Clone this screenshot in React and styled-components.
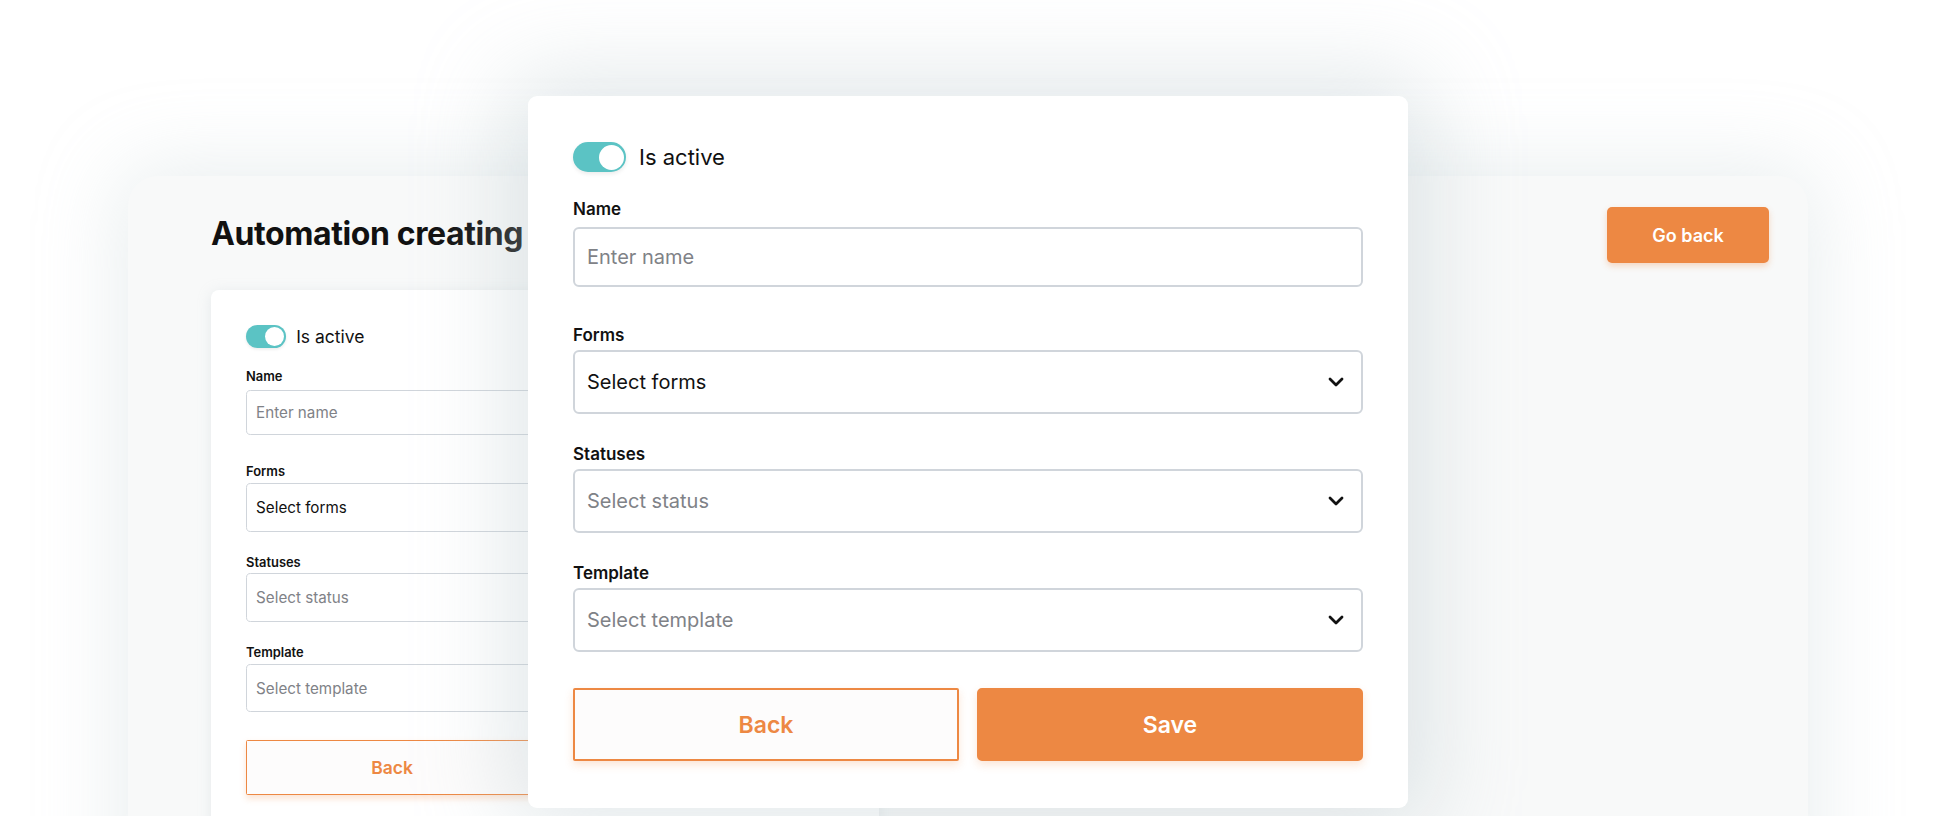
import React from 'react';
import styled, { createGlobalStyle } from 'styled-components';

const ORANGE = '#ed8843';

const GlobalStyle = createGlobalStyle`
  html, body {
    margin: 0;
    padding: 0;
    background: #fff;
  }
  body {
    font-family: Inter, "Noto Sans", sans-serif;
    color: #111;
    overflow: hidden;
  }
`;

const Stage = styled.div`
  position: relative;
  width: 1936px;
  height: 816px;
  overflow: hidden;
  box-sizing: border-box;
  padding: 176px 0 0 128px;
  background: #fff;
`;

const Panel = styled.section`
  width: 1680px;
  height: 720px;
  box-sizing: border-box;
  padding: 31px 39px 0 83px;
  border-radius: 30px 30px 0 0;
  background: #f8f9f9;
  box-shadow: 0 0 80px 10px rgba(196, 208, 212, 0.35);
`;

const PanelHeader = styled.div`
  display: flex;
  justify-content: space-between;
  align-items: flex-start;
`;

const Title = styled.h1`
  margin: 8px 0 0;
  font-size: 32px;
  line-height: 38px;
  font-weight: 700;
  letter-spacing: -0.4px;
  color: #111;
`;

const GoBack = styled.button`
  width: 162px;
  height: 56px;
  border: none;
  border-radius: 5px;
  background: ${ORANGE};
  color: #fff;
  font-family: inherit;
  font-size: 18px;
  font-weight: 600;
  box-shadow: 0 3px 6px rgba(237, 136, 67, 0.3);
`;

const InnerCard = styled.div`
  margin-top: 27px;
  width: 668px;
  box-sizing: border-box;
  padding: 35px;
  border-radius: 8px;
  background: #fff;
  box-shadow: 0 2px 14px rgba(180, 192, 198, 0.25);
`;

const Modal = styled.div`
  position: absolute;
  top: 96px;
  left: 528px;
  width: 880px;
  box-sizing: border-box;
  padding: 46px 45px 47px;
  border-radius: 9px;
  background: #fff;
  box-shadow: 0 0 90px 20px rgba(186, 200, 206, 0.42);
`;

const Stack = styled.div`
  display: flex;
  flex-direction: column;
  zoom: ${(p) => p.$scale || 1};
`;

const ToggleRow = styled.label`
  display: flex;
  align-items: center;
  gap: 13px;
  height: 30px;
  font-size: ${(p) => (p.$small ? 23 : 22)}px;
  color: #111;
`;

const Toggle = styled.span`
  position: relative;
  width: 53px;
  height: 30px;
  border-radius: 15px;
  background: #5bc3c4;
  box-shadow: 0 2px 4px rgba(0, 0, 0, 0.08);

  &::after {
    content: '';
    position: absolute;
    top: 2.5px;
    right: 2.5px;
    width: 25px;
    height: 25px;
    border-radius: 50%;
    background: #fff;
  }
`;

const Field = styled.div`
  display: flex;
  flex-direction: column;
  margin-top: ${(p) => p.$top}px;
`;

const Label = styled.span`
  font-size: 17px;
  line-height: 23px;
  font-weight: 600;
  color: #111;
  margin-bottom: ${(p) => p.$gap}px;
`;

const TextInput = styled.input`
  height: 60px;
  box-sizing: border-box;
  padding: 0 12px;
  border: 2px solid #d0d5db;
  border-radius: 6px;
  background: #fff;
  font-family: inherit;
  font-size: 20px;
  color: #111;
  outline: none;

  &::placeholder {
    color: #7f8287;
  }
`;

const SelectBox = styled.div`
  height: 64px;
  box-sizing: border-box;
  display: flex;
  align-items: center;
  justify-content: space-between;
  padding: 0 17px 0 12px;
  border: 2px solid #d0d5db;
  border-radius: 6px;
  background: #fff;
  font-size: 20px;
  color: ${(p) => (p.$empty ? '#7f8287' : '#111')};
`;

const Buttons = styled.div`
  display: grid;
  grid-template-columns: 1fr 1fr;
  gap: 18px;
  margin-top: 36px;
`;

const ActionButton = styled.button`
  height: 73px;
  box-sizing: border-box;
  border: 2px solid ${ORANGE};
  border-radius: ${(p) => (p.$primary ? '5px' : '2px')};
  background: ${(p) => (p.$primary ? ORANGE : '#fdfcfc')};
  color: ${(p) => (p.$primary ? '#fff' : ORANGE)};
  font-family: inherit;
  font-size: 23px;
  font-weight: 600;
  box-shadow: 0 4px 8px rgba(237, 136, 67, 0.22);
`;

const Chevron = () => (
  <svg width="16" height="10" viewBox="0 0 16 10" fill="none">
    <path
      d="M2 2L8 8L14 2"
      stroke="#111"
      strokeWidth="2.8"
      strokeLinecap="round"
      strokeLinejoin="round"
    />
  </svg>
);

const Select = ({ value, placeholder, chevron }) => (
  <SelectBox $empty={!value}>
    <span>{value || placeholder}</span>
    {chevron && <Chevron />}
  </SelectBox>
);

const AutomationForm = ({ scale, chevron }) => (
  <Stack $scale={scale}>
    <ToggleRow $small={!!scale}>
      <Toggle />
      Is active
    </ToggleRow>
    <Field $top={26}>
      <Label $gap={6}>Name</Label>
      <TextInput placeholder="Enter name" readOnly />
    </Field>
    <Field $top={37}>
      <Label $gap={3}>Forms</Label>
      <Select value="Select forms" chevron={chevron} />
    </Field>
    <Field $top={29}>
      <Label $gap={3}>Statuses</Label>
      <Select placeholder="Select status" chevron={chevron} />
    </Field>
    <Field $top={29}>
      <Label $gap={3}>Template</Label>
      <Select placeholder="Select template" chevron={chevron} />
    </Field>
    <Buttons>
      <ActionButton>Back</ActionButton>
      <ActionButton $primary>Save</ActionButton>
    </Buttons>
  </Stack>
);

export default function App() {
  return (
    <>
      <GlobalStyle />
      <Stage>
        <Panel>
          <PanelHeader>
            <Title>Automation creating</Title>
            <GoBack>Go back</GoBack>
          </PanelHeader>
          <InnerCard>
            <AutomationForm scale={0.76} chevron />
          </InnerCard>
        </Panel>
        <Modal>
          <AutomationForm chevron />
        </Modal>
      </Stage>
    </>
  );
}
